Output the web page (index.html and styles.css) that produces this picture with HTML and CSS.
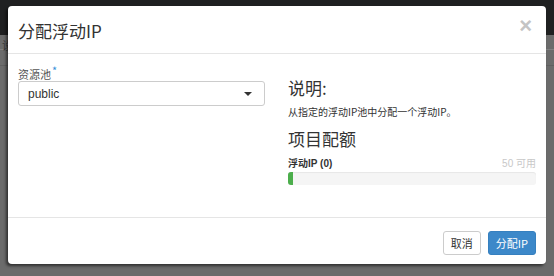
FILE: index.html
```html
<!DOCTYPE html>
<html lang="zh">
<head>
  <meta charset="UTF-8" />
  <title>分配浮动IP</title>
  <link rel="stylesheet" href="styles.css">
</head>
<body>
  <div class="backdrop">
    <div class="topbar"></div>
    <div class="page-row first">设</div>
    <div class="page-row"></div>
  </div>

  <div class="modal">
    <div class="modal-header">
      <h3 class="modal-title">分配浮动IP</h3>
      <span class="close">&times;</span>
    </div>

    <div class="modal-body">
      <div class="left-col">
        <label class="field-label">资源池<span class="required">*</span></label>
        <div class="select">
          <span>public</span>
          <span class="caret"></span>
        </div>
      </div>

      <div class="right-col">
        <h3 class="section-title">说明:</h3>
        <p class="help">从指定的浮动IP池中分配一个浮动IP。</p>
        <h3 class="section-title quota">项目配额</h3>
        <div class="quota-row">
          <span class="quota-name">浮动IP (0)</span>
          <span class="quota-left">50 可用</span>
        </div>
        <div class="progress">
          <div class="progress-bar"></div>
        </div>
      </div>
    </div>

    <div class="modal-footer">
      <button class="btn btn-default">取消</button>
      <button class="btn btn-primary">分配IP</button>
    </div>
  </div>
</body>
</html>
```

FILE: styles.css
```css
body {
  margin: 0;
  width: 554px;
  height: 276px;
  overflow: hidden;
  position: relative;
  background-color: #6b6b6b;
  font-family: "Liberation Sans", "Noto Sans CJK SC", sans-serif;
  color: #333;
}

.backdrop {
  height: 100%;
}

.topbar {
  height: 35px;
  background-color: #1f2021;
}

.page-row {
  height: 15px;
  border-bottom: 1px solid #5f5f5f;
  font-size: 11px;
  color: #3a3a3a;
  padding-left: 2px;
  line-height: 22px;
}

.page-row.first {
  height: 14px;
  border-bottom: 1px solid #808080;
}

.modal {
  position: absolute;
  left: 8px;
  top: 6px;
  width: 538px;
  height: 258px;
  background: #fff;
  border-radius: 4px;
  box-shadow: -2px 2px 3px rgba(0, 0, 0, 0.55);
  display: flex;
  flex-direction: column;
}

.modal-header {
  height: 47px;
  border-bottom: 1px solid #e5e5e5;
  padding: 0 10px;
  display: flex;
  align-items: center;
  justify-content: space-between;
}

.modal-title {
  margin: 0;
  font-family: "Noto Sans CJK SC", sans-serif;
  font-size: 17px;
  font-weight: normal;
  color: #333;
  padding-top: 1px;
}

.close {
  font-size: 22px;
  font-weight: bold;
  color: #c4c4c4;
  margin-right: 4px;
  margin-top: -8px;
  line-height: 1;
}

.modal-body {
  flex: 1;
  padding: 8px 10px 0;
  display: grid;
  grid-template-columns: 247px 248px;
  column-gap: 23px;
  border-bottom: 1px solid #e5e5e5;
}

.field-label {
  display: block;
  font-family: "Noto Sans CJK SC", sans-serif;
  font-size: 11px;
  color: #555;
  height: 16px;
  line-height: 16px;
}

.required {
  color: #3a8fd8;
  font-size: 11px;
  vertical-align: 4px;
  margin-left: 1px;
}

.select {
  margin-top: 3px;
  height: 25px;
  border: 1px solid #ccc;
  border-radius: 3px;
  box-sizing: border-box;
  padding: 0 10px 0 9px;
  display: flex;
  align-items: center;
  justify-content: space-between;
  font-size: 12px;
  color: #333;
}

.caret {
  width: 0;
  height: 0;
  border-left: 4px solid transparent;
  border-right: 4px solid transparent;
  border-top: 4px solid #333;
  margin-right: 2px;
}

.section-title {
  margin: 15px 0 0;
  font-family: "Noto Sans CJK SC", sans-serif;
  font-size: 17px;
  font-weight: normal;
  line-height: 22px;
  color: #333;
}

.section-title.quota {
  margin-top: 9px;
}

.help {
  margin: 6px 0 0;
  font-family: "Noto Sans CJK SC", sans-serif;
  font-size: 10px;
  line-height: 14px;
  color: #333;
}

.quota-row {
  margin-top: 7px;
  display: flex;
  justify-content: space-between;
  font-size: 10px;
  line-height: 13px;
}

.quota-name {
  font-weight: bold;
  color: #333;
}

.quota-left {
  color: #c8c8c8;
}

.progress {
  margin-top: 2px;
  height: 13px;
  background: #f5f5f5;
  border-radius: 3px;
  box-shadow: inset 0 1px 1px rgba(0, 0, 0, 0.06);
}

.progress-bar {
  width: 5px;
  height: 100%;
  background: #4cae4c;
  border-radius: 3px 0 0 3px;
}

.modal-footer {
  height: 46px;
  padding: 0 10px;
  display: flex;
  align-items: center;
  justify-content: flex-end;
  gap: 7px;
}

.btn {
  font-family: "Noto Sans CJK SC", sans-serif;
  font-size: 11px;
  height: 24px;
  margin-top: 3px;
  padding: 0 7px;
  border-radius: 3px;
  border: 1px solid #ccc;
  background: #fff;
  color: #333;
}

.btn-primary {
  background: #3c88c9;
  border-color: #3680bf;
  color: #fff;
  padding: 0 7px;
}
```
